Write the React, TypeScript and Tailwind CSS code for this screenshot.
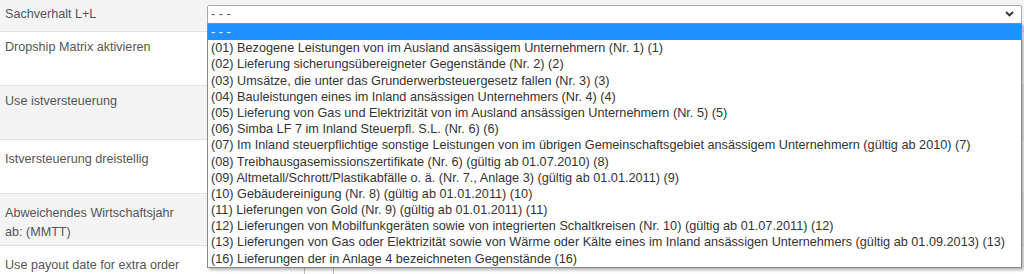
const options = [
  '(01) Bezogene Leistungen von im Ausland ansässigem Unternehmern (Nr. 1) (1)',
  '(02) Lieferung sicherungsübereigneter Gegenstände (Nr. 2) (2)',
  '(03) Umsätze, die unter das Grunderwerbsteuergesetz fallen (Nr. 3) (3)',
  '(04) Bauleistungen eines im Inland ansässigen Unternehmers (Nr. 4) (4)',
  '(05) Lieferung von Gas und Elektrizität von im Ausland ansässigen Unternehmern (Nr. 5) (5)',
  '(06) Simba LF 7 im Inland Steuerpfl. S.L. (Nr. 6) (6)',
  '(07) Im Inland steuerpflichtige sonstige Leistungen von im übrigen Gemeinschaftsgebiet ansässigem Unternehmern (gültig ab 2010) (7)',
  '(08) Treibhausgasemissionszertifikate (Nr. 6) (gültig ab 01.07.2010) (8)',
  '(09) Altmetall/Schrott/Plastikabfälle o. ä. (Nr. 7., Anlage 3) (gültig ab 01.01.2011) (9)',
  '(10) Gebäudereinigung (Nr. 8) (gültig ab 01.01.2011) (10)',
  '(11) Lieferungen von Gold (Nr. 9) (gültig ab 01.01.2011) (11)',
  '(12) Lieferungen von Mobilfunkgeräten sowie von integrierten Schaltkreisen (Nr. 10) (gültig ab 01.07.2011) (12)',
  '(13) Lieferungen von Gas oder Elektrizität sowie von Wärme oder Kälte eines im Inland ansässigen Unternehmers (gültig ab 01.09.2013) (13)',
  '(16) Lieferungen der in Anlage 4 bezeichneten Gegenstände (16)',
];

const rows = [
  { label: ['Sachverhalt L+L'], cls: 'h-[32px] pt-[5px] bg-[#f4f4f4]' },
  { label: ['Dropship Matrix aktivieren'], cls: 'h-[54px] pt-[6px] bg-white' },
  { label: ['Use istversteuerung'], cls: 'h-[54px] pt-[6px] bg-[#f4f4f4]' },
  { label: ['Istversteuerung dreistellig'], cls: 'h-[54px] pt-[10px] bg-white' },
  { label: ['Abweichendes Wirtschaftsjahr', 'ab: (MMTT)'], cls: 'h-[52px] pt-[10px] bg-[#f4f4f4]' },
  { label: ['Use payout date for extra order'], cls: 'h-[40px] pt-[10px] bg-white' },
];

export default function App() {
  return (
    <div
      className="relative w-[1024px] h-[274px] overflow-hidden bg-white text-[12.6px] leading-[18.5px] text-[#555]"
      style={{ fontFamily: '"Liberation Sans", Arial, sans-serif' }}
    >
      {rows.map((r, i) => (
        <div key={i} className={`flex border-b border-[#e3e3e3] ${r.cls}`}>
          <div className="w-[207px] pl-[5px]">
            {r.label.map((l) => (
              <div key={l}>{l}</div>
            ))}
          </div>
          <div className="flex-1">
            {i === 0 && (
              <div className="relative h-[19px] w-[815px] rounded-[2px] border border-[#a9a9a9] bg-white pl-[3px] leading-[17px] text-[#555]">
                - - -
                <svg className="absolute right-[7px] top-[5px]" width="9" height="6" viewBox="0 0 9 6">
                  <polyline points="1,1 4.5,4.5 8,1" fill="none" stroke="#333" strokeWidth="1.8" />
                </svg>
              </div>
            )}
            {i === 5 && (
              <div className="flex h-[30px]">
                <div className="w-[98px] border-r border-[#bbb]" />
                <div className="w-[29px] border-r border-[#bbb]" />
              </div>
            )}
          </div>
        </div>
      ))}

      {/* open select list */}
      <div className="absolute left-[207px] top-[23px] w-[815px] border border-[#8a8a8a] bg-white text-[12.7px] text-[#333] shadow-[2px_2px_3px_rgba(0,0,0,0.3)]">
        <div className="h-[16.2px] bg-[#1e90ff] pl-[3px] leading-[16px] text-white">- - -</div>
        {options.map((o) => (
          <div key={o} className="h-[16.2px] whitespace-nowrap pl-[3px] leading-[16px]">
            {o}
          </div>
        ))}
      </div>
    </div>
  );
}
